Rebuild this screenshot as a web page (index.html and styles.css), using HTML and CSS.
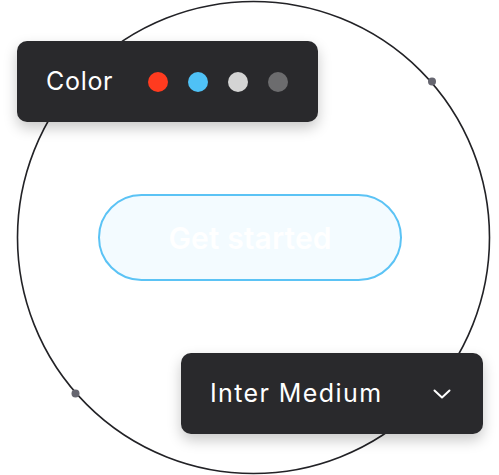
FILE: index.html
```html
<!DOCTYPE html>
<html>
<head>
<meta charset="utf-8">
<link rel="stylesheet" href="styles.css">
</head>
<body>
<div class="stage">
  <svg class="ring" width="499" height="475" viewBox="0 0 499 475">
    <circle cx="253.5" cy="237.5" r="236" fill="none" stroke="#222226" stroke-width="1.6"/>
    <circle cx="432" cy="81.5" r="4" fill="#666670"/>
    <circle cx="75.5" cy="393.5" r="4" fill="#666670"/>
  </svg>
  <div class="cta">Get started</div>
  <div class="panel panel-color">
    <span class="label label-color">Color</span>
    <div class="swatches">
      <span class="swatch red"></span>
      <span class="swatch blue"></span>
      <span class="swatch light"></span>
      <span class="swatch dark"></span>
    </div>
  </div>
  <div class="panel panel-font">
    <span class="label label-font">Inter Medium</span>
    <svg class="chevron" width="18" height="10" viewBox="0 0 18 10">
      <path d="M1.5 1.5 L9 8.5 L16.5 1.5" fill="none" stroke="#ffffff" stroke-width="2" stroke-linecap="round" stroke-linejoin="round"/>
    </svg>
  </div>
</div>
</body>
</html>
```

FILE: styles.css
```css
html, body {
  margin: 0;
  padding: 0;
  background: #ffffff;
}
body {
  font-family: Inter, "Noto Sans", sans-serif;
}
.stage {
  position: relative;
  width: 499px;
  height: 475px;
  overflow: hidden;
}
.ring {
  position: absolute;
  left: 0;
  top: 0;
}
.cta {
  position: absolute;
  left: 98px;
  top: 194px;
  width: 304px;
  height: 87px;
  box-sizing: border-box;
  border: 2px solid #5bc3f5;
  border-radius: 44px;
  background: #f3fbff;
  color: #ffffff;
  font-size: 30px;
  font-weight: 600;
  display: flex;
  align-items: center;
  justify-content: center;
  letter-spacing: 0.1px;
}
.panel {
  position: absolute;
  height: 81px;
  box-sizing: border-box;
  background: #29292c;
  border-radius: 10px;
  box-shadow: 0 6px 14px rgba(0, 0, 0, 0.22);
  display: flex;
  align-items: center;
  color: #ffffff;
  font-size: 25px;
  font-weight: 400;
}
.panel-color {
  left: 17px;
  top: 41px;
  width: 301px;
  padding-left: 29px;
}
.panel-font {
  left: 181px;
  top: 353px;
  width: 302px;
  padding-left: 29px;
  padding-right: 32px;
  justify-content: space-between;
}
.label {
  line-height: 1;
}
.label-color {
  letter-spacing: 0.7px;
}
.label-font {
  letter-spacing: 1.4px;
}
.swatches {
  display: flex;
  gap: 20px;
  margin-left: 35px;
}
.swatch {
  width: 20px;
  height: 20px;
  border-radius: 50%;
}
.red { background: #ff3b1f; }
.blue { background: #4fc1f6; }
.light { background: #d4d4d4; }
.dark { background: #6c6c6e; }
.chevron {
  display: block;
}
```
